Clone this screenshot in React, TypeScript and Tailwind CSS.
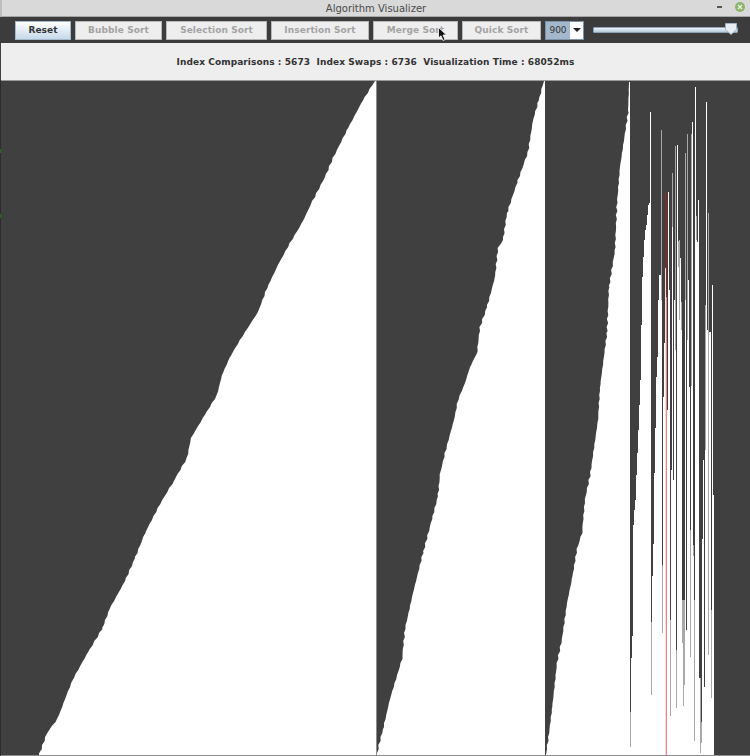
const font = { fontFamily: '"DejaVu Sans", "Liberation Sans", sans-serif' };

const dark = "#404040";

type Pt = [number, number];

// outline of the sorted ramps, [x, y] from top to bottom
const rampA: Pt[] = [[375, 81], [363, 100], [347, 130], [333, 158], [325, 177], [312, 202], [302, 223], [290, 243], [278, 265], [267, 288], [258, 312], [240, 340], [230, 357], [222, 375], [217, 395], [203, 418], [191, 438], [187, 458], [172, 484], [160, 504], [145, 533], [135, 558], [125, 581], [110, 608], [102, 629], [87, 654], [73, 679], [65, 699], [58, 718], [47, 733], [39, 755]];
const rampB: Pt[] = [[544, 81], [538, 103], [533, 120], [528, 152], [517, 183], [507, 213], [503, 240], [498, 248], [495, 277], [487, 307], [480, 327], [477, 353], [470, 367], [465, 383], [458, 400], [454, 420], [446, 449], [440, 474], [438, 496], [432, 519], [423, 553], [413, 593], [405, 629], [402, 659], [390, 699], [383, 729], [377, 753]];
const rampC: Pt[] = [[629, 82], [628, 113], [620, 167], [617, 203], [615, 250], [609, 287], [607, 333], [600, 387], [598, 420], [590, 476], [585, 499], [582, 533], [577, 549], [572, 579], [567, 603], [562, 639], [557, 663], [552, 709], [547, 749]];

// the unsorted end: [x, white from y] or [x, grey from y, white from y]
const columns: number[][] = [
  [630, 712, 747], [631, 658], [632, 636], [633, 525], [634, 510], [635, 500], [636, 475], [637, 453], [638, 430], [639, 405],
  [640, 380], [641, 325], [642, 277], [643, 257], [644, 240], [645, 230], [646, 225], [647, 215], [648, 205], [649, 203],
  [650, 112], [651, 622, 695], [652, 576], [653, 544], [654, 473], [655, 428], [656, 377], [657, 357], [658, 300], [659, 275],
  [660, 275], [661, 130, 300], [662, 565, 633], [663, 397], [664, 343], [665, 268], [667, 410], [668, 192], [669, 290],
  [670, 620, 716], [671, 470], [672, 173, 227], [673, 480], [674, 300], [675, 146, 350], [676, 650, 708], [677, 145], [678, 241, 267], [679, 240, 320],
  [680, 258], [681, 302, 330], [682, 600, 643], [683, 600, 706], [684, 600, 685], [685, 153, 300], [686, 630], [687, 134, 340], [688, 280], [689, 387],
  [690, 530, 657], [691, 134, 386], [692, 122], [693, 545, 556], [694, 600, 741], [695, 87], [696, 216, 240], [697, 242], [698, 200], [699, 678],
  [700, 678, 753], [701, 722, 743], [702, 539], [703, 460], [704, 687], [705, 305, 450], [706, 102], [707, 330], [708, 213, 655], [709, 332],
  [710, 332], [711, 610, 698], [712, 285], [713, 495],
];

// roughen a ramp edge so it steps like the single bars do
function edge(points: Pt[]) {
  const out: string[] = [];
  for (let i = 0; i < points.length - 1; i++) {
    const [x0, y0] = points[i];
    const [x1, y1] = points[i + 1];
    for (let y = y0; y < y1; y += 4) {
      const t = (y - y0) / (y1 - y0);
      const wobble = i === 0 && t < 0.3 ? 0 : Math.sin(y * 0.9) * 0.4 + Math.sin(y * 2.3) * 0.3;
      out.push(`${(x0 + (x1 - x0) * t + wobble).toFixed(1)},${y}`);
    }
  }
  const last = points[points.length - 1];
  out.push(`${last[0]},${last[1]}`);
  return out;
}

function Chart() {
  return (
    <svg width="750" height="676" viewBox="0 80 750 676" className="block">
      <rect x="0" y="80" width="750" height="676" fill={dark} />
      <polygon points={[...edge(rampA), "376,755", "376,81"].join(" ")} fill="#fff" />
      <polygon points={[...edge(rampB), "377,755", "545,755", "545,81"].join(" ")} fill="#fff" />
      <polygon points={[...edge(rampC), "546,755", "630,755", "630,82"].join(" ")} fill="#fff" />
      <g shapeRendering="crispEdges">
        {columns.map(([x, a, b]) =>
          b === undefined ? (
            <rect key={x} x={x} y={a} width="1" height={755 - a} fill="#fff" />
          ) : (
            <g key={x}>
              <rect x={x} y={a} width="1" height={b - a} fill="#a8a8a8" />
              <rect x={x} y={b} width="1" height={755 - b} fill="#fff" />
            </g>
          ),
        )}
        <rect x="665" y="193" width="2" height="75" fill="#6f3030" />
        <rect x="666" y="268" width="1" height="29" fill="#6f3030" />
        <rect x="665" y="268" width="1" height="487" fill="#fbdcdc" />
        <rect x="666" y="297" width="1" height="458" fill="#e8848c" />
        <rect x="667" y="193" width="1" height="104" fill="#5a3535" />
        <rect x="376" y="81" width="1" height="674" fill="#8c8c8c" />
        <rect x="0" y="80" width="750" height="1" fill="#9a9a9a" />
        <rect x="0" y="755" width="750" height="1" fill="#8c8c8c" />
        <rect x="0" y="80" width="1" height="676" fill="#2c2c2c" />
        <rect x="0" y="149" width="1" height="4" fill="#1f6b1f" />
        <rect x="0" y="214" width="1" height="4" fill="#1f6b1f" />
      </g>
    </svg>
  );
}

function SortButton({ label, width }: { label: string; width: string }) {
  return (
    <button className={`${width} h-[19px] shrink-0 bg-[#eeeeee] border border-[#b8b8b8] text-[9px] font-bold tracking-[0.08px] text-[#a3a3a3] leading-none`}>
      {label}
    </button>
  );
}

export default function App() {
  return (
    <div className="relative w-[750px] h-[756px] overflow-hidden flex flex-col bg-[#404040]" style={font}>
      <div className="relative h-[17px] shrink-0 flex items-center justify-center bg-[#d9d9d9] border-b border-[#a6a6a6] border-l-2 border-l-[#bdbdbd]">
        <span className="text-[10px] text-[#4a4a4a]">Algorithm Visualizer</span>
        <div className="absolute left-[715px] top-[6px] w-[5px] h-[2px] bg-[#555555]" />
        <div className="absolute left-[733px] top-[2px] w-[10px] h-[10px] rounded-full bg-[#8ab56a] flex items-center justify-center">
          <svg width="6" height="6" viewBox="0 0 6 6">
            <path d="M1 1 L5 5 M5 1 L1 5" stroke="#eef5e6" strokeWidth="1.3" />
          </svg>
        </div>
      </div>

      <div className="h-[26px] shrink-0 flex items-center gap-[4px] pl-[15px] bg-[#3c3c3c]">
        <button className="w-[56px] h-[19px] shrink-0 bg-gradient-to-b from-[#ffffff] to-[#c6d9ea] border border-[#a5b9cc] text-[9px] font-bold tracking-[0.08px] text-[#333333] leading-none">
          Reset
        </button>
        <SortButton label="Bubble Sort" width="w-[87px]" />
        <SortButton label="Selection Sort" width="w-[101px]" />
        <SortButton label="Insertion Sort" width="w-[98px]" />
        <SortButton label="Merge Sort" width="w-[85px]" />
        <SortButton label="Quick Sort" width="w-[79px]" />
        <div className="w-[39px] h-[19px] shrink-0 flex border border-[#7f93a8] bg-white">
          <div className="w-[24px] bg-[#a3b8cc] flex items-center justify-center text-[9px] text-[#333333] leading-none">
            900
          </div>
          <div className="flex-1 flex items-center justify-center">
            <div className="w-0 h-0 border-l-[4px] border-r-[4px] border-t-[4px] border-l-transparent border-r-transparent border-t-[#222222]" />
          </div>
        </div>
        <div className="relative ml-[5px] w-[145px] h-[6px] rounded-[1px] border border-[#8da3b8] bg-gradient-to-b from-[#eef3f8] to-[#b4cadf]">
          <svg width="12" height="12" viewBox="0 0 12 12" className="absolute right-[0px] top-[-5px]">
            <path d="M0.5 0.5 H11.5 V6.5 L6 11.5 L0.5 6.5 Z" fill="#e8eef4" stroke="#9fb2c4" />
          </svg>
        </div>
      </div>

      <div className="h-[37px] shrink-0 pt-[3px] flex items-center justify-center bg-[#eeeeee] ml-[1px] text-[9px] font-bold tracking-[0.08px] text-[#333333] whitespace-pre">
        Index Comparisons : 5673  Index Swaps : 6736  Visualization Time : 68052ms
      </div>

      <Chart />

      {/* mouse pointer over the Merge Sort button */}
      <svg width="11" height="15" viewBox="0 0 11 15" className="absolute left-[438px] top-[27px]">
        <path d="M0.5 0.5 V11 L3 8.8 L5 13.5 L7 12.6 L5 8 H8.5 Z" fill="#111111" stroke="#ffffff" strokeWidth="0.8" />
      </svg>
    </div>
  );
}
